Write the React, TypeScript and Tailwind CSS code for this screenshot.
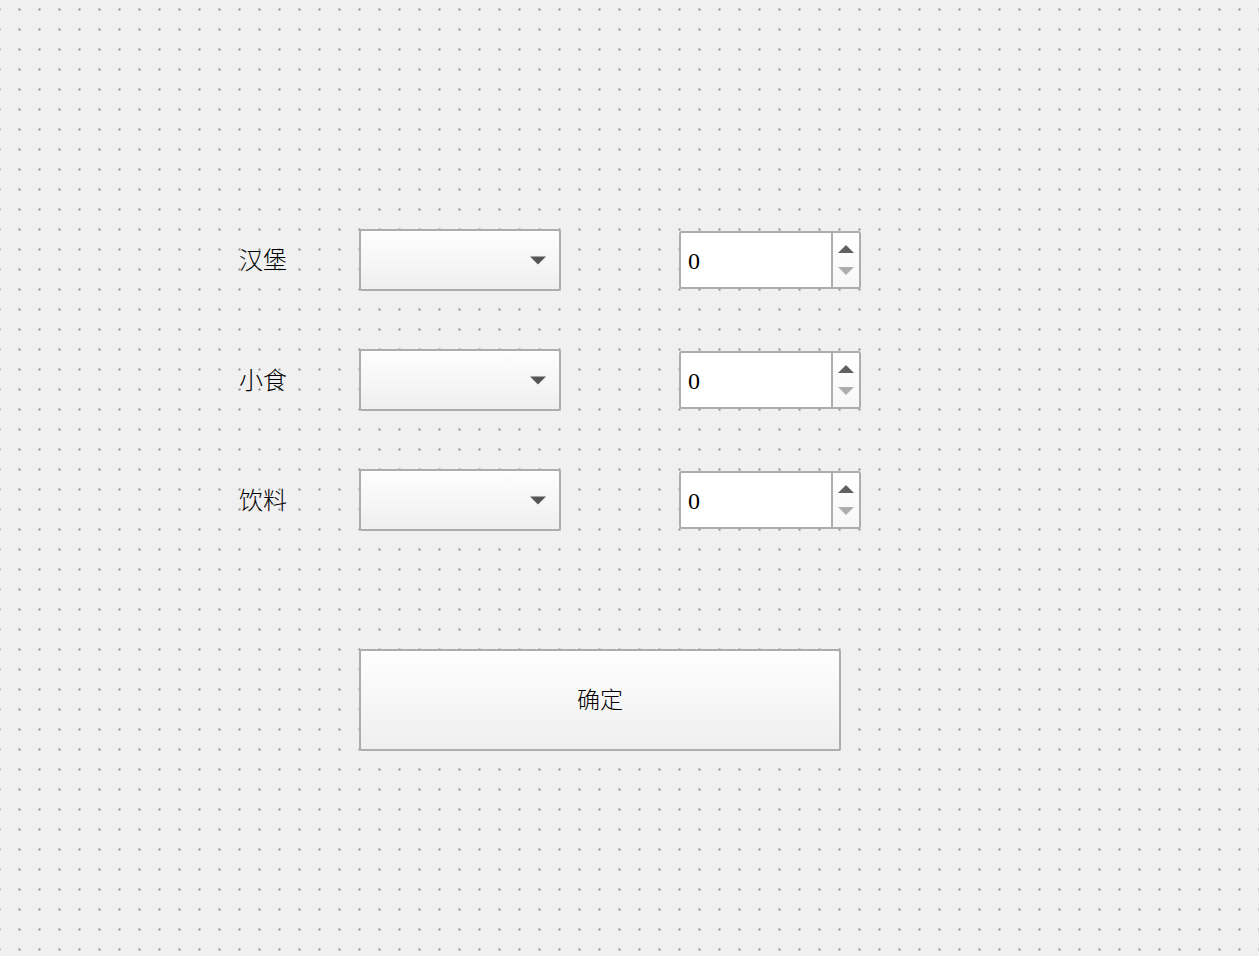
const font = "font-['Noto_Sans_CJK_SC','Noto_Sans',sans-serif]";

function ComboBox() {
  return (
    <div className="flex h-[62px] w-[202px] items-center justify-end rounded-[3px] border-2 border-[#adadad] bg-gradient-to-b from-[#fefefe] to-[#efefef] pr-[12px]">
      <svg width="18" height="9" viewBox="0 0 18 9">
        <path d="M1 0.5 L17 0.5 L9 8.5 Z" fill="#555555" />
      </svg>
    </div>
  );
}

function SpinBox() {
  return (
    <div className="flex h-[58px] w-[182px] rounded-[3px] border-2 border-[#adadad] bg-white">
      <div className="flex flex-1 items-center pl-[7px] pt-[2px] font-['Liberation_Serif',serif] text-[24px] leading-none text-black">
        0
      </div>
      <div className="flex w-[28px] flex-col items-center justify-center gap-[14px] border-l-2 border-[#adadad] bg-gradient-to-b from-white to-[#f7f7f7]">
        <svg width="16" height="8" viewBox="0 0 16 8">
          <path d="M8 0 L16 8 L0 8 Z" fill="#606060" />
        </svg>
        <svg width="16" height="8" viewBox="0 0 16 8">
          <path d="M0 0 L16 0 L8 8 Z" fill="#adadad" />
        </svg>
      </div>
    </div>
  );
}

function Row({ label }: { label: string }) {
  return (
    <div className="flex h-[62px] items-center">
      <div className={`w-[120px] pb-[2px] text-[24px] font-light leading-none text-black ${font}`}>{label}</div>
      <ComboBox />
      <div className="ml-[118px]">
        <SpinBox />
      </div>
    </div>
  );
}

export default function App() {
  return (
    <div className="h-[956px] w-full overflow-hidden bg-[#f0f0f0] bg-[image:conic-gradient(from_270deg_at_2px_2px,#8c8c8c_90deg,transparent_0)] bg-[size:20px_20px] bg-[position:18.5px_8.5px]">
      <div className="flex flex-col gap-[58px] pl-[239px] pt-[229px]">
        <Row label="汉堡" />
        <Row label="小食" />
        <Row label="饮料" />
      </div>
      <div className="ml-[359px] mt-[118px]">
        <button
          className={`flex h-[102px] w-[482px] items-center justify-center rounded-[3px] border-2 border-[#adadad] bg-gradient-to-b from-[#fefefe] to-[#efefef] pb-[3px] text-[23px] font-light text-black ${font}`}
        >
          确定
        </button>
      </div>
    </div>
  );
}
